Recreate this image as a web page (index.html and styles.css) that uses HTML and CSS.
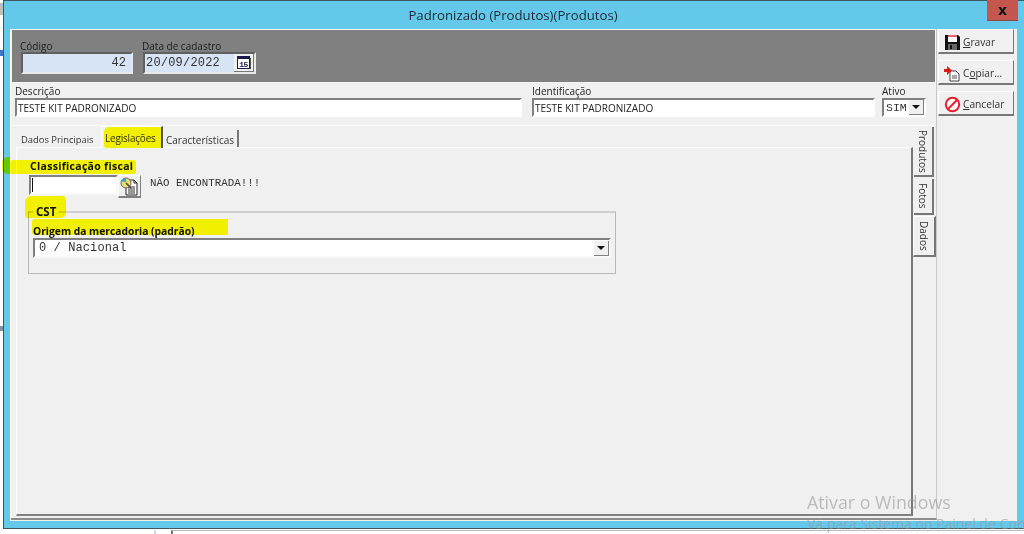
FILE: index.html
```html
<!DOCTYPE html>
<html lang="pt">
<head>
<meta charset="utf-8">
<title>Padronizado</title>
<link rel="stylesheet" href="styles.css">
</head>
<body>
<div class="window">
  <header class="titlebar">
    <span class="title">Padronizado (Produtos)(Produtos)</span>
    <button class="close">x</button>
  </header>
  <div class="client">
    <main class="left">
      <section class="graypanel">
        <div class="field codigo">
          <label>Código</label>
          <div class="sunken blue num">42</div>
        </div>
        <div class="field data">
          <label>Data de cadastro</label>
          <div class="sunken blue date"><span>20/09/2022</span>
            <span class="calbtn"><svg width="14" height="14" viewBox="0 0 14 14"><rect x=".5" y=".5" width="12" height="12" fill="#fff" stroke="#1a1a50"/><rect x=".5" y=".5" width="12" height="2.500" fill="#1a1a50"/><rect x="13" y="2" width="1" height="11" fill="#555"/><text x="6.500" y="11" class="caltext">15</text></svg></span>
          </div>
        </div>
      </section>
      <section class="descrow">
        <div class="field desc">
          <label>Descrição</label>
          <div class="sunken white sans">TESTE KIT PADRONIZADO</div>
        </div>
        <div class="field ident">
          <label>Identificação</label>
          <div class="sunken white sans">TESTE KIT PADRONIZADO</div>
        </div>
        <div class="field ativo">
          <label>Ativo</label>
          <div class="sunken white mono combo"><span class="val">SIM</span><span class="arrowbtn"><i></i></span></div>
        </div>
      </section>
      <section class="tabsarea">
        <div class="tabs-main">
          <nav class="tabstrip">
            <span class="tab first">Dados Principais</span>
            <span class="tab active">Legislações</span>
            <span class="tab third">Características</span>
          </nav>
          <div class="page">
            <div class="classif">
              <label class="bold">Classificação fiscal</label>
              <div class="classif-row">
                <div class="sunken white classinput"><span class="caret"></span></div>
                <button class="lookup"><svg width="19" height="19" viewBox="0 0 19 19"><path d="M6 3h8l3 3v12H6z" fill="#fff" stroke="#222"/><path d="M14 3v3h3" fill="none" stroke="#222"/><path d="M8 10h7M8 12h7M8 14h7M8 16h7" stroke="#333"/><circle cx="6" cy="6" r="5" fill="#e8dc70" stroke="#667"/><path d="M1.500 4.500A5 5 0 0 1 6 1v4z" fill="#2fa4d8"/><path d="M6 6l5 5" stroke="#444" stroke-width="1.500"/></svg></button>
                <span class="notfound">NÃO ENCONTRADA!!!</span>
              </div>
            </div>
            <fieldset class="cst">
              <legend class="bold">CST</legend>
              <label class="bold origem">Origem da mercadoria (padrão)</label>
              <div class="sunken white mono combo wide"><span class="val">0 / Nacional</span><span class="arrowbtn"><i></i></span></div>
            </fieldset>
          </div>
        </div>
        <nav class="sidetabs">
          <span class="vtab produtos"><b>Produtos</b></span>
          <span class="vtab fotos"><b>Fotos</b></span>
          <span class="vtab dados"><b>Dados</b></span>
        </nav>
      </section>
    </main>
    <aside class="actions">
      <button class="action"><svg width="17" height="17" viewBox="0 0 17 17"><path d="M1 1h13l2 2v13H1z" fill="#111"/><rect x="4" y="1" width="9" height="7" fill="#fff"/><rect x="4" y="1" width="9" height="2" fill="#e86070"/><rect x="4" y="10" width="9" height="6" fill="#666"/><rect x="6" y="11" width="2" height="4" fill="#111"/></svg><span><u>G</u>ravar</span></button>
      <button class="action"><svg width="17" height="17" viewBox="0 0 17 17"><path d="M6 6h6l3 3v7H6z" fill="#fff" stroke="#444"/><path d="M8 11h5M8 13h5" stroke="#555"/><path d="M0 4h3V1l5 4.500L3 10V7H0z" fill="#e01818"/></svg><span>C<u>o</u>piar...</span></button>
      <button class="action"><svg width="17" height="17" viewBox="0 0 17 17"><circle cx="8.500" cy="8.500" r="6.700" fill="#fff" stroke="#ec1c2c" stroke-width="2"/><path d="M13 4l-9 9" stroke="#ec1c2c" stroke-width="2"/></svg><span><u>C</u>ancelar</span></button>
    </aside>
  </div>
</div>
<div class="highlight h1"></div>
<div class="highlight h2"></div>
<div class="highlight h2b"></div>
<div class="highlight h3"></div>
<div class="highlight h4"></div>
<div class="desk"><i class="d1"></i><i class="d2"></i><i class="d3"></i><i class="d4"></i><i class="d5"></i></div>
<div class="watermark"><div class="wm1">Ativar o Windows</div><div class="wm2">Vá para Sistema no Painel de Controle</div></div>
</body>
</html>
```
FILE: styles.css
```css
* { box-sizing: border-box; }
html, body { margin: 0; padding: 0; width: 1024px; height: 534px; overflow: hidden; background: #fff; }
body { font: 10px "Open Sans", "Noto Sans", sans-serif; color: #222; position: relative; }
label { display: block; line-height: 12px; white-space: nowrap; }
button { font: inherit; color: inherit; padding: 0; }

.window { margin-left: 3px; width: 1021px; height: 529px; background: #64c8ea; border-top: 1px solid #3f5560; border-left: 1px solid #3f5560; border-bottom: 1px solid #3f5560; display: flex; flex-direction: column; filter: blur(.4px); }
.titlebar { height: 28px; display: flex; justify-content: center; align-items: center; position: relative; flex: none; }
.title { font: 13.200px "Open Sans", sans-serif; color: #1c2a30; margin-right: 2px; }
.close { position: absolute; right: 6px; top: -1px; width: 31px; height: 21px; background: #c4564e; border: 0; border-bottom: 1px solid #8a4a48; font: bold 14px "DejaVu Sans", sans-serif; color: #111; line-height: 17px; }

.client { margin: 0 7px 0 6px; height: 492px; background: #f0f0f0; display: flex; border-left: 1px solid #fff; flex: none; }
.left { width: 926px; display: flex; flex-direction: column; border-right: 1px solid #c8c8c8; border-bottom: 2px solid #8c8c8c; flex: none; height: 491px; }
.actions { flex: 1; display: flex; flex-direction: column; gap: 6px; padding: 0 4px 0 1px; }
.action { width: 76px; height: 25px; background: #f0f0f0; border: 1px solid #fff; border-right-color: #777; border-bottom: 2px solid #777; display: flex; align-items: center; gap: 2px; padding: 2px 0 0 5px; font-size: 10.200px; color: #333; flex: none; }

.graypanel { height: 54px; background: #808080; border: 1px solid #f4f4f4; display: flex; gap: 10px; padding: 10px 0 0 9px; color: #1c1c1c; flex: none; }
.sunken { border: 2px solid; border-color: #808080 #fff #fff #808080; }
.blue { background: #d6e4f5; }
.white { background: #fff; }
.sans { height: 19px; line-height: 16px; padding-left: 1px; font-size: 10px; color: #222; }
.mono, .num, .date { font-family: "Liberation Mono", monospace; font-size: 12px; }
.field.codigo { width: 112px; }
.field.data { width: 113px; }
.graypanel label { margin-left: -1px; }
.num { height: 22px; line-height: 18px; text-align: right; padding-right: 5px; border-color: #606060 #e8e8e8 #e8e8e8 #606060; color: #333; }
.date { height: 22px; display: flex; justify-content: space-between; align-items: center; padding-left: 1px; border-color: #606060 #e8e8e8 #e8e8e8 #606060; color: #333; letter-spacing: .2px; }
.calbtn { width: 20px; height: 18px; background: #f0f0f0; display: flex; align-items: center; justify-content: center; border-right: 1px solid #777; border-bottom: 1px solid #777; }
.caltext { font: bold 8px "Liberation Mono", monospace; fill: #1a1a50; text-anchor: middle; letter-spacing: -.5px; }

.descrow { height: 42px; display: flex; padding: 2px 0 0 4px; flex: none; }
.desc { width: 507px; margin-right: 10px; }
.ident { width: 343px; margin-right: 7px; }
.ativo { width: 44px; }
.descrow label { margin-bottom: 1px; }
.combo { display: flex; justify-content: space-between; align-items: center; height: 19px; }
.val { padding-left: 1px; color: #333; }
.ativo .val { padding-left: 2px; font-size: 11.500px; }
.arrowbtn { width: 15px; height: 15px; background: #f0f0f0; border-right: 1px solid #808080; border-bottom: 1px solid #808080; display: flex; align-items: center; justify-content: center; flex: none; }
.arrowbtn i { border: 4px solid transparent; border-top: 4px solid #111; border-bottom: 0; }

.tabsarea { flex: 1; display: flex; padding: 0 0 2px 5px; border-top: 1px solid #fafafa; min-height: 0; }
.tabs-main { width: 897px; display: flex; flex-direction: column; flex: none; }
.tabstrip { height: 21px; display: flex; align-items: flex-end; padding-left: 1px; flex: none; position: relative; z-index: 1; }
.tab { height: 17px; line-height: 20px; color: #333; white-space: nowrap; }
.first { width: 84px; padding: 0 4px; font-size: 9.400px; }
.active { width: 62px; height: 22px; line-height: 23px; background: #f0f0f0; border-left: 1px solid #fff; border-top: 1px solid #fff; border-right: 2px solid #555; padding: 0 3px; margin-bottom: -1px; letter-spacing: -.2px; }
.third { width: 76px; border-right: 2px solid #777; padding: 0 3px; }
.page { flex: 1; background: #f0f0f0; border: 1px solid #fff; border-right: 2px solid #777; border-bottom: 2px solid #808080; padding: 12px 0 0 12px; }
.bold { font-weight: 700; color: #111; font-size: 10.500px; }
.classif label { padding-left: 1px; letter-spacing: .3px; }
.classif-row { display: flex; align-items: flex-start; margin-top: 3px; height: 23px; }
.classinput { width: 89px; height: 20px; position: relative; border-color: #808080 #f8f8f8 #f8f8f8 #808080; }
.caret { position: absolute; left: 1px; top: 1px; width: 1px; height: 14px; background: #111; }
.lookup { width: 23px; height: 23px; border: 1px solid #fff; border-right-color: #808080; border-bottom: 2px solid #808080; background: #f0f0f0; display: flex; align-items: center; justify-content: center; }
.notfound { font: 10.800px/16px "Liberation Mono", monospace; color: #333; margin-left: 9px; }
.cst { margin: 6px 0 0 -1px; padding: 0 4px; width: 588px; height: 70px; border: 1px solid #b8b8b8; border-top: 2px solid #d0d0d0; }
.cst legend { padding: 0 3px; margin-left: 0; line-height: 15px; font-size: 11.500px; }
.cst label.origem { margin: 6px 0 1px; font-size: 10.300px; }
.wide { width: 578px; height: 20px; border-color: #808080 #f8f8f8 #f8f8f8 #808080; }
.wide .val { padding-left: 4px; letter-spacing: .1px; }

.sidetabs { width: 23px; display: flex; flex-direction: column; padding-left: 1px; flex: none; }
.vtab { display: flex; align-items: center; justify-content: center; border-right: 2px solid #777; border-bottom: 2px solid #777; background: #f0f0f0; width: 20px; flex: none; }
.vtab b { font-weight: 400; writing-mode: vertical-rl; color: #333; white-space: nowrap; }
.produtos { height: 50px; margin-top: 1px; }
.fotos { height: 36px; margin-top: 2px; }
.dados { height: 41px; width: 23px; margin-left: -1px; margin-top: 1px; border-top: 1px solid #fff; border-left: 1px solid #fff; }

.highlight { position: absolute; background: #ffff00; mix-blend-mode: multiply; filter: blur(.4px); }
.h1 { left: 104px; top: 127px; width: 58px; height: 21px; border-radius: 5px 3px 2px 3px; }
.h2 { left: 10px; top: 160px; width: 126px; height: 14px; border-radius: 2px; }
.h2b { left: 2px; top: 157px; width: 8px; height: 17px; border-radius: 6px 0 0 6px; }
.h3 { left: 25px; top: 196px; width: 41px; height: 22px; border-radius: 6px 4px 5px 3px; }
.h4 { left: 32px; top: 219px; width: 196px; height: 16px; border-radius: 3px 0 0 3px; }

.desk i { position: absolute; display: block; }
.d1 { left: 154px; top: 530px; width: 2px; height: 4px; background: #cfd8e4; }
.d2 { left: 171px; top: 530px; width: 853px; height: 4px; border-left: 2px solid #777; border-top: 1px solid #bbb; }
.d3 { left: 0; top: 3px; width: 3px; height: 12px; background: #c0c0c0; }
.d4 { left: 0; top: 50px; width: 3px; height: 6px; background: #3c78c8; }
.d5 { left: 0; top: 326px; width: 3px; height: 5px; background: #8890a8; }

.watermark { position: absolute; left: 807px; top: 490px; width: 217px; overflow: hidden; white-space: nowrap; pointer-events: none; font-family: "Open Sans", sans-serif; color: rgba(150,150,150,.6); }
.wm1 { font-size: 17.800px; line-height: 24px; }
.wm2 { font-size: 14px; line-height: 20px; margin-top: -2px; padding-top: 2px; }
```
